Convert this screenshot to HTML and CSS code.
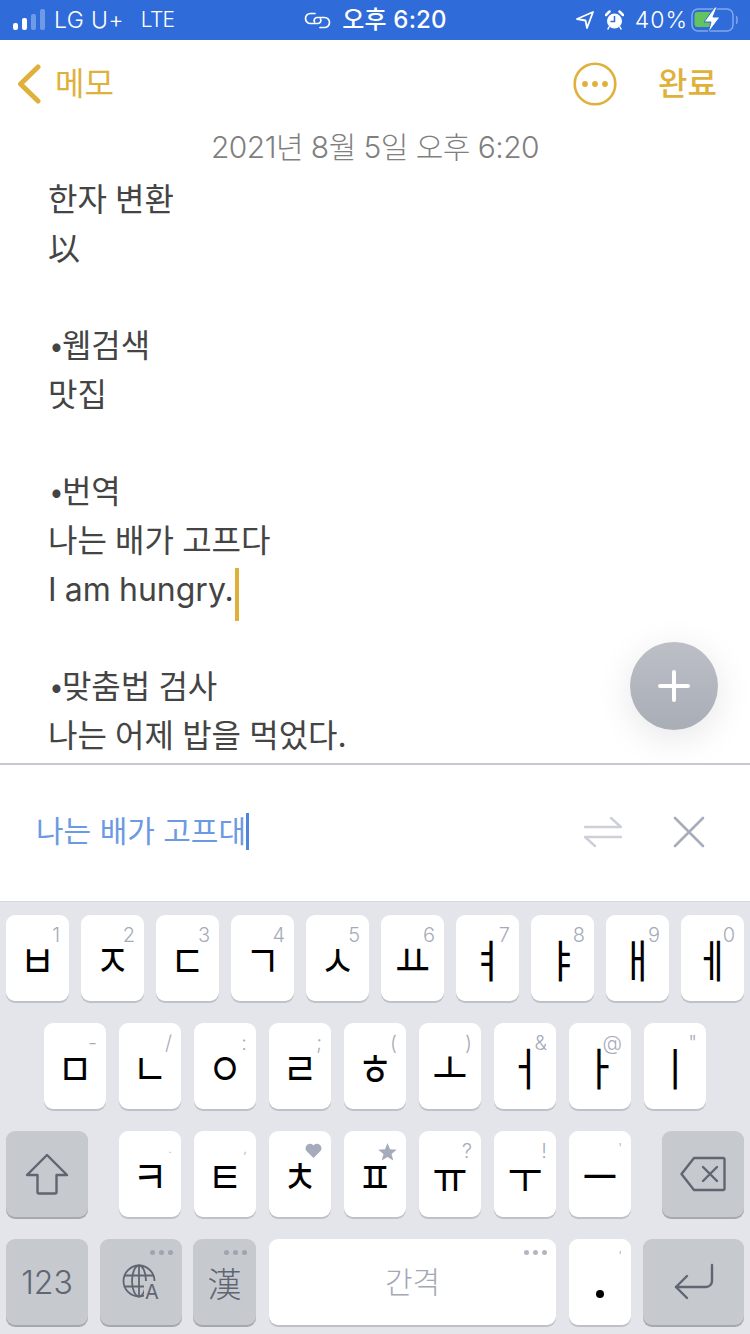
FILE: index.html
```html
<!DOCTYPE html>
<html lang="ko">
<head>
<meta charset="utf-8">
<title>메모</title>
<link rel="stylesheet" href="styles.css">
</head>
<body>
<div class="app">
  <header class="status">
    <div class="status-left">
      <svg class="signal" width="34" height="22" viewBox="0 0 34 22"><rect x="0" y="14" width="5" height="7" rx="2" fill="#fff"/><rect x="9" y="9" width="5" height="12" rx="2" fill="#fff"/><rect x="18" y="5" width="5" height="16" rx="2" fill="#6f9ae6"/><rect x="27" y="0" width="5" height="21" rx="2" fill="#6f9ae6"/></svg>
      <span class="carrier">LG U+</span><span class="carrier lte">LTE</span>
    </div>
    <div class="status-center">
      <svg width="27" height="17" viewBox="0 0 27 17" fill="none" stroke="#fff" stroke-width="1.700" stroke-linecap="round"><path d="M11 1.500H6.500a5 5 0 0 0 0 10H14a3 3 0 0 0 2.500-4.500"/><path d="M16 15.500h4.500a5 5 0 0 0 0-10H13a3 3 0 0 0-2.500 4.500"/></svg>
      <span class="time">오후 6:20</span>
    </div>
    <div class="status-right">
      <svg width="18" height="20" viewBox="0 0 18 20" fill="none" stroke="#fff" stroke-width="1.800" stroke-linejoin="round"><path d="M1 9 17 2 11 18 9.500 10.500Z"/></svg>
      <svg width="19" height="20" viewBox="0 0 19 20"><circle cx="9.500" cy="11" r="7.500" fill="#fff"/><path d="M9.500 6v5.500H5.500" fill="none" stroke="#2f6bd9" stroke-width="1.500"/><path d="M1 5 4.500 1.500M18 5 14.500 1.500" stroke="#fff" stroke-width="2.500" stroke-linecap="round"/><path d="M4 17 3 19M15 17l1 2" stroke="#fff" stroke-width="1.500" stroke-linecap="round"/></svg>
      <span class="carrier pct">40%</span>
      <svg class="battery" width="47" height="26" viewBox="0 0 47 26"><rect x="1" y="2" width="41" height="22" rx="6" fill="none" stroke="#83a8ea" stroke-width="1.500"/><path d="M45 9.500c1.300.5 1.500 6.500 0 7" stroke="#83a8ea" stroke-width="1.500" fill="none"/><rect x="3.500" y="5" width="18" height="15" rx="3" fill="#62c35f"/><path d="M24 0 13 15h7l-3 11 12-16h-7l4-10z" fill="#fff" stroke="#2f6bd9" stroke-width="1"/></svg>
    </div>
  </header>

  <nav class="nav">
    <div class="back">
      <svg width="24" height="40" viewBox="0 0 24 40" fill="none" stroke="#e0b13a" stroke-width="5" stroke-linecap="round" stroke-linejoin="round"><path d="M21 3 3.500 20 21 37"/></svg>
      <span class="nav-label">메모</span>
    </div>
    <div class="nav-actions">
      <svg width="44" height="44" viewBox="0 0 44 44"><circle cx="22" cy="22" r="20.300" fill="none" stroke="#e0b13a" stroke-width="2.600"/><circle cx="12" cy="22" r="2.900" fill="#e0b13a"/><circle cx="22" cy="22" r="2.900" fill="#e0b13a"/><circle cx="32" cy="22" r="2.900" fill="#e0b13a"/></svg>
      <span class="nav-label done">완료</span>
    </div>
  </nav>

  <main class="editor">
    <div class="date">2021년 8월 5일 오후 6:20</div>
    <div class="note">
      <p>한자 변환</p>
      <p>以</p>
      <p>&nbsp;</p>
      <p><span class="bullet">•</span>웹검색</p>
      <p>맛집</p>
      <p>&nbsp;</p>
      <p><span class="bullet">•</span>번역</p>
      <p>나는 배가 고프다</p>
      <p>I am hungry.<span class="caret"></span></p>
      <p>&nbsp;</p>
      <p><span class="bullet">•</span>맞춤법 검사</p>
      <p>나는 어제 밥을 먹었다.</p>
    </div>
    <button class="fab" aria-label="추가">
      <svg width="34" height="34" viewBox="0 0 34 34" stroke="#fff" stroke-width="4" stroke-linecap="round"><path d="M17 3v28M3 17h28"/></svg>
    </button>
  </main>

  <section class="compose">
    <div class="compose-text">나는 배가 고프대<span class="compose-caret"></span></div>
    <div class="compose-icons">
      <svg width="38" height="32" viewBox="0 0 38 32" fill="none" stroke="#cdd0d8" stroke-width="2.400" stroke-linecap="round" stroke-linejoin="round"><path d="M1 11h36L27 2M37 21H1l10 9"/></svg>
      <svg width="32" height="32" viewBox="0 0 32 32" fill="none" stroke="#a9adbb" stroke-width="2.600" stroke-linecap="round"><path d="M2 2l28 28M30 2 2 30"/></svg>
    </div>
  </section>

  <section class="keyboard">
    <div class="row row-1">
      <div class="key"><span class="jamo">ㅂ</span><i class="hint">1</i></div>
      <div class="key"><span class="jamo">ㅈ</span><i class="hint">2</i></div>
      <div class="key"><span class="jamo">ㄷ</span><i class="hint">3</i></div>
      <div class="key"><span class="jamo">ㄱ</span><i class="hint">4</i></div>
      <div class="key"><span class="jamo">ㅅ</span><i class="hint">5</i></div>
      <div class="key"><span class="jamo">ㅛ</span><i class="hint">6</i></div>
      <div class="key"><span class="jamo">ㅕ</span><i class="hint">7</i></div>
      <div class="key"><span class="jamo">ㅑ</span><i class="hint">8</i></div>
      <div class="key"><span class="jamo">ㅐ</span><i class="hint">9</i></div>
      <div class="key"><span class="jamo">ㅔ</span><i class="hint">0</i></div>
    </div>
    <div class="row row-2">
      <div class="key"><span class="jamo">ㅁ</span><i class="hint">-</i></div>
      <div class="key"><span class="jamo">ㄴ</span><i class="hint">/</i></div>
      <div class="key"><span class="jamo">ㅇ</span><i class="hint">:</i></div>
      <div class="key"><span class="jamo">ㄹ</span><i class="hint">;</i></div>
      <div class="key"><span class="jamo">ㅎ</span><i class="hint">(</i></div>
      <div class="key"><span class="jamo">ㅗ</span><i class="hint">)</i></div>
      <div class="key"><span class="jamo">ㅓ</span><i class="hint">&amp;</i></div>
      <div class="key"><span class="jamo">ㅏ</span><i class="hint">@</i></div>
      <div class="key"><span class="jamo">ㅣ</span><i class="hint">"</i></div>
    </div>
    <div class="row row-3">
      <div class="key key-fn key-wide">
        <svg width="44" height="42" viewBox="0 0 44 42" fill="none" stroke="#5f6672" stroke-width="2.400" stroke-linejoin="round"><path d="M22 2 2 22h10.500v17a1.500 1.500 0 0 0 1.500 1.500h16a1.500 1.500 0 0 0 1.500-1.500V22H42Z"/></svg>
      </div>
      <div class="letters">
        <div class="key"><span class="jamo">ㅋ</span><i class="hint hint-tiny">.</i></div>
        <div class="key"><span class="jamo">ㅌ</span><i class="hint hint-tiny">,</i></div>
        <div class="key"><span class="jamo">ㅊ</span><svg class="hint-icon" width="17" height="15" viewBox="0 0 17 15"><path d="M8.500 15 1.500 8A4.300 4.300 0 0 1 8.500 2.500 4.300 4.300 0 0 1 15.500 8Z" fill="#a6abbb"/></svg></div>
        <div class="key"><span class="jamo">ㅍ</span><svg class="hint-icon" width="19" height="18" viewBox="0 0 19 18"><path d="M9.500 0l2.500 6.300 6.800.4-5.300 4.300 1.800 6.600-5.800-3.700-5.800 3.700 1.800-6.600L.2 6.700 7 6.300Z" fill="#a6abbb"/></svg></div>
        <div class="key"><span class="jamo">ㅠ</span><i class="hint">?</i></div>
        <div class="key"><span class="jamo">ㅜ</span><i class="hint">!</i></div>
        <div class="key"><span class="jamo">ㅡ</span><i class="hint hint-tiny">'</i></div>
      </div>
      <div class="key key-fn key-wide">
        <svg width="46" height="36" viewBox="0 0 46 36" fill="none" stroke="#5f6672" stroke-width="2.400" stroke-linejoin="round" stroke-linecap="round"><path d="M1.500 18 14 2h29a1.500 1.500 0 0 1 1.500 1.500v29A1.500 1.500 0 0 1 43 34H14Z"/><path d="M23 11l14 14M37 11 23 25"/></svg>
      </div>
    </div>
    <div class="row row-4">
      <div class="key key-fn key-wide key-text">123</div>
      <div class="key key-fn key-wide">
        <svg class="globe" width="36" height="36" viewBox="0 0 36 36" fill="none" stroke="#5f6672" stroke-width="1.800"><circle cx="17" cy="17" r="15.500"/><ellipse cx="17" cy="17" rx="7" ry="15.500"/><path d="M17 1.500v31M2.500 11.500h29M2.500 22.500h20"/></svg>
        <span class="globe-a">A</span>
        <span class="dots"><b></b><b></b><b></b></span>
      </div>
      <div class="key key-fn key-han">漢<span class="dots"><b></b><b></b><b></b></span></div>
      <div class="key key-space">간격<span class="dots dots-light"><b></b><b></b><b></b></span></div>
      <div class="key key-period"><span class="period"></span><i class="hint hint-tiny">'</i></div>
      <div class="key key-fn key-return">
        <svg width="42" height="38" viewBox="0 0 42 38" fill="none" stroke="#5f6672" stroke-width="2.400" stroke-linecap="round" stroke-linejoin="round"><path d="M39 2v16a6 6 0 0 1-6 6H3"/><path d="M14 13 3 24l11 11"/></svg>
      </div>
    </div>
  </section>
</div>
</body>
</html>
```
FILE: styles.css
```css
* { box-sizing: border-box; }
html, body { margin: 0; padding: 0; }
body { width: 750px; height: 1334px; overflow: hidden; background: #fff; font-family: "Inter", "Noto Sans CJK KR", sans-serif; }
.app { width: 750px; height: 1334px; display: flex; flex-direction: column; }

.status { height: 40px; flex: none; background: #2f6bd9; color: #fff; display: grid; grid-template-columns: 1fr auto 1fr; align-items: center; padding: 0 12px 0 13px; }
.status-left, .status-center, .status-right { display: flex; align-items: center; }
.status-left { gap: 19px; }
.signal { margin-right: -12px; }
.carrier { font-size: 23px; font-weight: 300; line-height: 40px; letter-spacing: .4px; }
.lte { font-size: 21px; letter-spacing: -.8px; margin-left: -2px; }
.status-center { gap: 11px; }
.time { font-size: 24px; font-weight: 500; line-height: 40px; letter-spacing: .2px; }
.status-right { justify-content: flex-end; gap: 11px; }
.pct { margin-right: -8px; letter-spacing: 1px; }

.nav { height: 85px; flex: none; display: flex; align-items: center; justify-content: space-between; padding: 3px 33px 0 17px; color: #e0b13a; font-size: 32px; }
.back { display: flex; align-items: center; gap: 14px; }
.nav-label { line-height: 44px; margin-top: -1px; }
.nav-actions { display: flex; align-items: center; gap: 41px; }
.done { font-weight: 500; }

.editor { flex: none; height: 638px; position: relative; overflow: hidden; }
.date { text-align: center; font-size: 30px; font-weight: 300; line-height: 44px; color: #7f7f7f; letter-spacing: -.55px; }
.note { padding: 7px 0 0 48px; font-size: 32px; line-height: 48.7px; color: #444; word-spacing: -.8px; }
.note p { margin: 0; height: 48.7px; }
.bullet { margin-left: 3px; line-height: 0; font-family: "Noto Sans CJK KR", sans-serif; }
.caret { display: inline-block; width: 4px; height: 53px; margin: -11px 0 -10px 1px; background: #e0b13a; vertical-align: -10px; }
.fab { position: absolute; right: 32px; top: 517px; width: 88px; height: 88px; border-radius: 50%; border: 0; padding: 0; display: flex; align-items: center; justify-content: center; background: linear-gradient(#bcbfc6, #a9adb6); box-shadow: 0 8px 36px rgba(0,0,0,.1); }

.compose { height: 139px; flex: none; border-top: 2px solid #c6c9d2; border-bottom: 1px solid #d6d8dd; display: flex; align-items: center; justify-content: space-between; padding: 0 45px 4px 36px; }
.compose-text { font-size: 30px; line-height: 44px; color: #6b9ae2; display: flex; align-items: center; white-space: pre; }
.compose-caret { width: 3px; height: 37px; background: #4f86dc; }
.compose-icons { display: flex; align-items: center; gap: 51px; margin-top: 2px; }

.keyboard { flex: 1; min-height: 0; background: #e3e5ea; padding: 13px 6px 0; display: flex; flex-direction: column; gap: 22px; }
.row { display: flex; gap: 12px; height: 86px; flex: none; }
.row-2 { padding: 0 38px; gap: 13px; }
.row-3 { justify-content: space-between; }
.letters { display: flex; gap: 13px; }
.letters .key { width: 62px; flex: none; }
.row-2 .key { flex: 1 1 0; }
.key { flex: 1 1 0; position: relative; background: #fff; border-radius: 9px; box-shadow: 0 2px 0 #bfc1c7; display: flex; align-items: center; justify-content: center; font-size: 38px; color: #000; }
.jamo { display: block; line-height: 24px; font-weight: 400; font-family: "Noto Sans CJK KR", sans-serif; transform: translateY(1px) scaleY(1.2); }
.key-fn { background: #c6c9ce; box-shadow: 0 2px 0 #a5a8ae; color: #5f6672; font-weight: 300; }
.key-wide { flex: none; width: 82px; }
.key-text { font-size: 32px; }
.key-han { flex: none; width: 63px; font-size: 34px; margin-left: -1px; }
.key-space { flex: none; width: 287px; margin: 0 1px; padding-bottom: 4px; font-size: 30px; font-weight: 300; color: #a4a8b5; }
.key-period { flex: none; width: 62px; }
.key-return { flex: none; width: 101px; }
.hint { position: absolute; top: 12px; right: 9px; font-style: normal; font-size: 20px; line-height: 16px; font-weight: 300; color: #a6abbb; }
.hint-tiny { font-size: 13px; top: 10px; line-height: 14px; }
.hint-icon { position: absolute; top: 12px; right: 9px; }
.dots { position: absolute; top: 11px; right: 9px; display: flex; gap: 4px; }
.dots b { width: 5px; height: 5px; border-radius: 50%; background: #a0a4b1; }
.dots-light b { background: #b3b6c2; }
.period { width: 8px; height: 8px; border-radius: 50%; background: #000; margin-top: 24px; }
.globe { margin: 0 2px 0 0; }
.globe-a { position: absolute; left: 44px; top: 42px; font-size: 20px; line-height: 22px; font-weight: 400; background: #c6c9ce; padding-left: 1px; }
```
